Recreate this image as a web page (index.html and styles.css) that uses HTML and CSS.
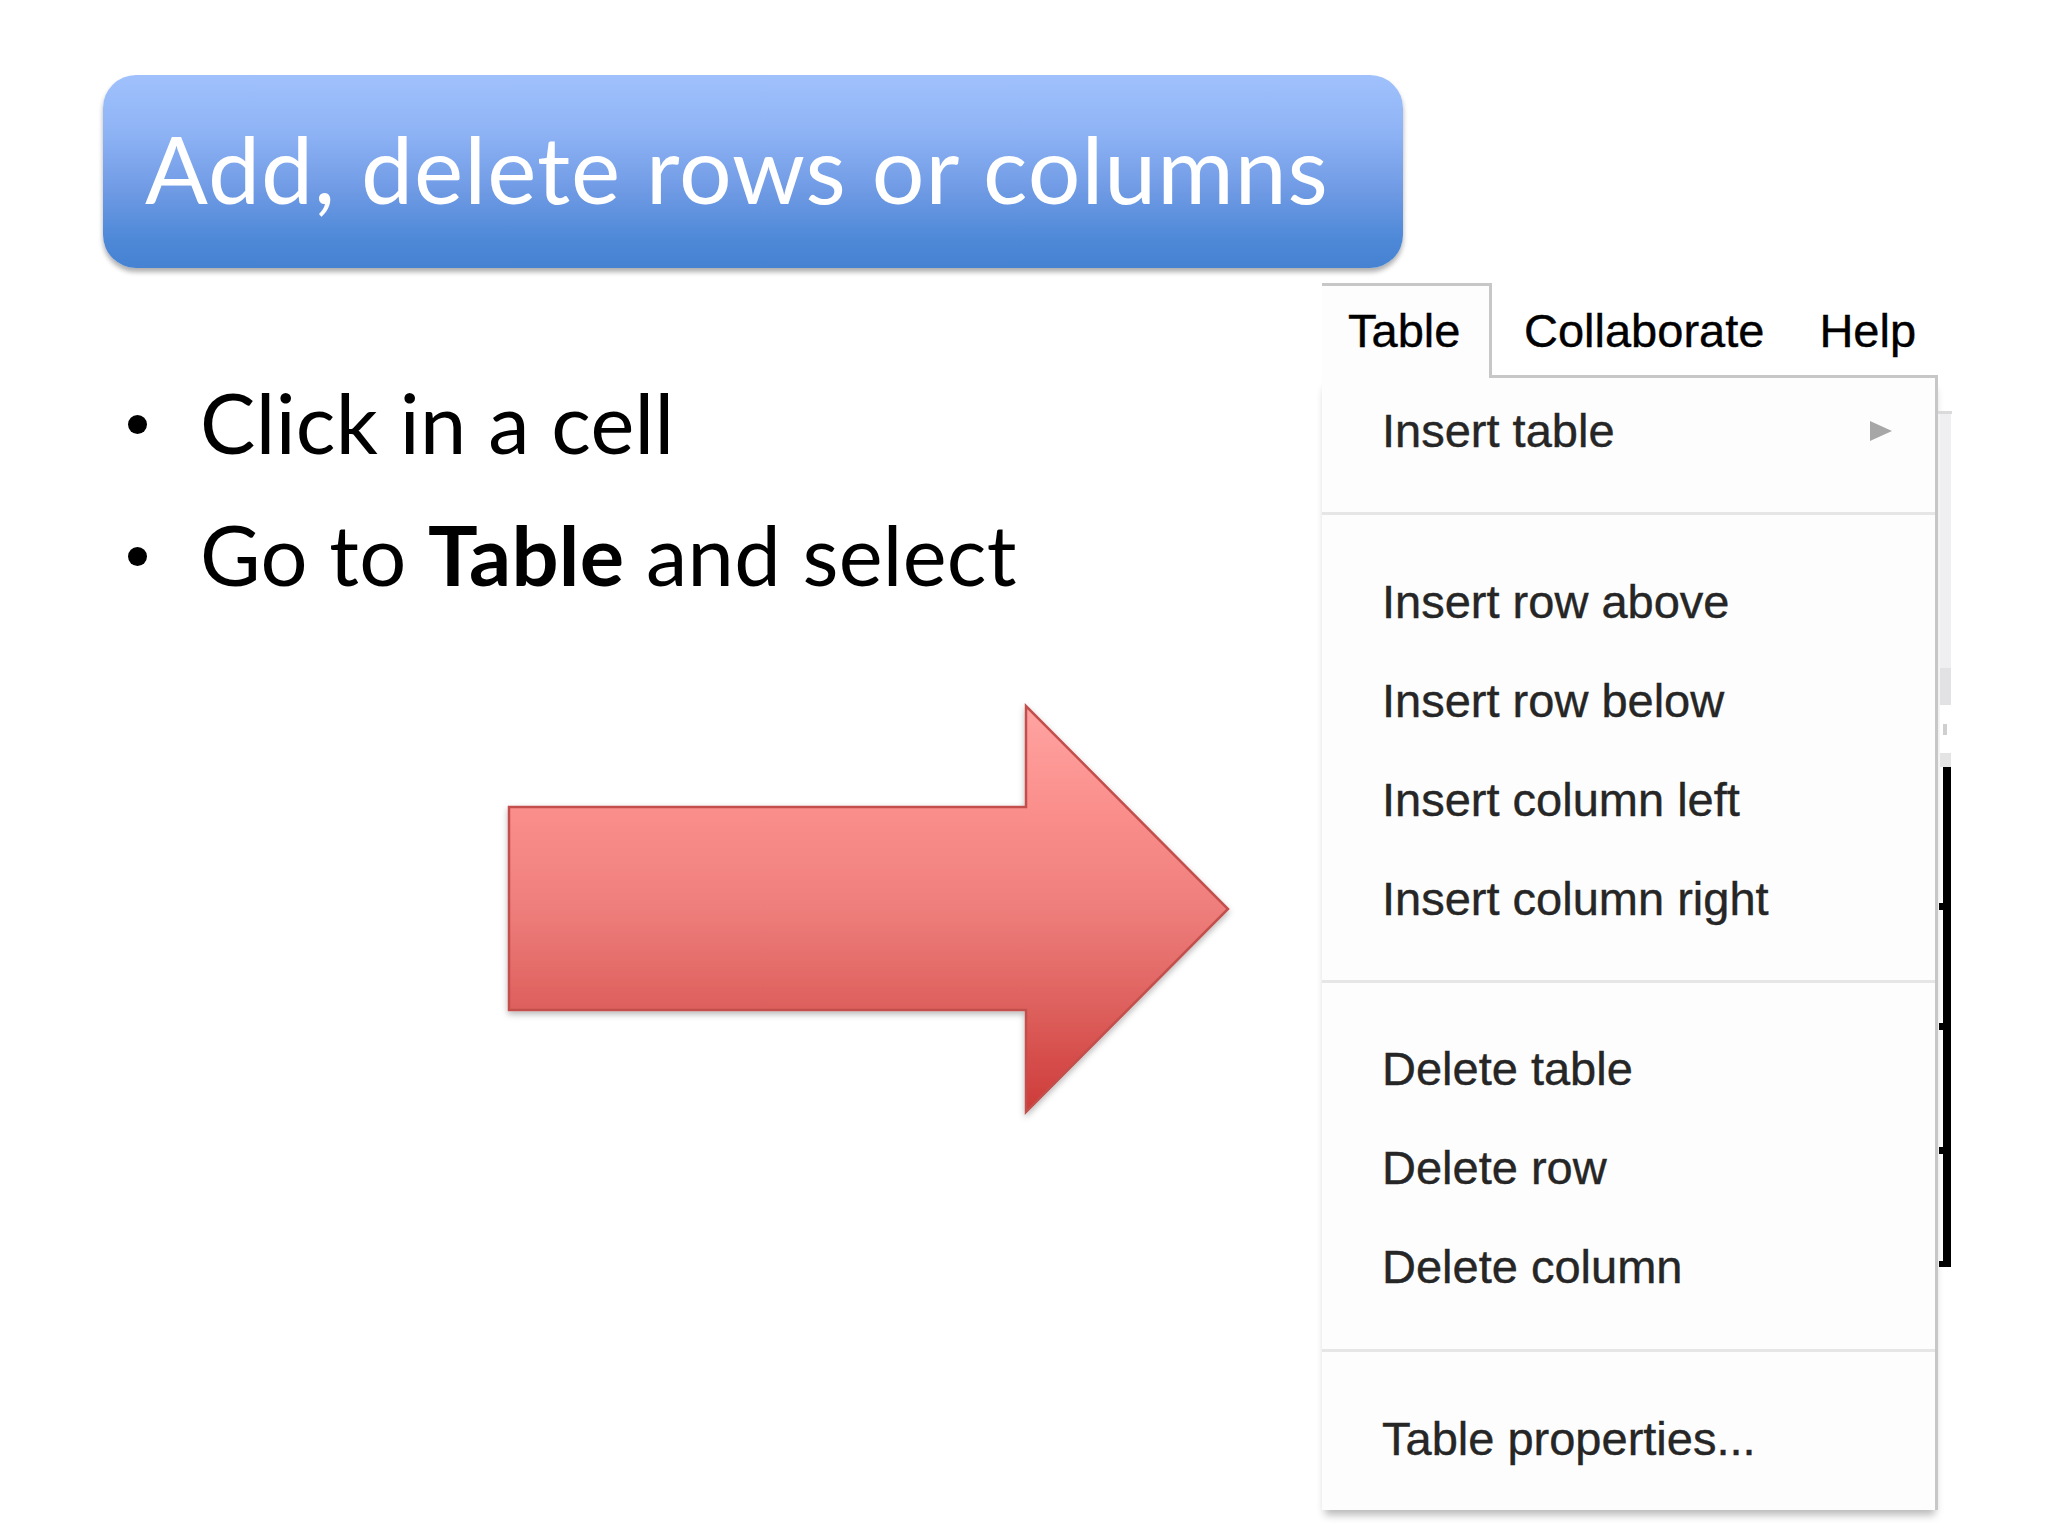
FILE: index.html
```html
<!DOCTYPE html>
<html lang="en">
<head>
<meta charset="utf-8">
<title>Add, delete rows or columns</title>
<link rel="stylesheet" href="styles.css">
</head>
<body>
<div class="slide">
  <header class="title-bar"><h1 class="title">Add, delete rows or columns</h1></header>
  <div class="content">
    <div class="left">
      <ul class="bullets">
        <li><span class="dot"></span><span>Click in a cell</span></li>
        <li><span class="dot"></span><span>Go to <b>Table</b> and select</span></li>
      </ul>
      <svg class="arrow" width="740" height="425" viewBox="0 0 740 425" aria-hidden="true">
        <defs>
          <linearGradient id="ag" x1="0" y1="0" x2="0" y2="1">
            <stop offset="0" stop-color="#ffa4a2"/>
            <stop offset="0.26" stop-color="#fa8e8b"/>
            <stop offset="0.5" stop-color="#ee7e7b"/>
            <stop offset="0.75" stop-color="#dd5f5c"/>
            <stop offset="1" stop-color="#cd3b39"/>
          </linearGradient>
          <filter id="sh" x="-5%" y="-5%" width="110%" height="115%">
            <feDropShadow dx="0" dy="3" stdDeviation="3" flood-color="#000" flood-opacity="0.28"/>
          </filter>
        </defs>
        <polygon points="9,108 526,108 526,7 728,210 526,413 526,311 9,311" fill="url(#ag)" stroke="#c24f4c" stroke-width="2.5" stroke-linejoin="miter" filter="url(#sh)"/>
      </svg>
    </div>
    <div class="menu-shot">
      <div class="menu-col">
        <div class="menubar">
          <div class="tab">Table</div>
          <div class="bar-rest">
            <span class="bar-item collab">Collaborate</span>
            <span class="bar-item help">Help</span>
          </div>
        </div>
        <div class="panel">
          <div class="group g1">
            <div class="item has-sub"><span>Insert table</span><svg class="sub" width="22" height="22" viewBox="0 0 22 22"><polygon points="0,1 22,11 0,21" fill="#a7a7a7"/></svg></div>
          </div>
          <div class="sep"></div>
          <div class="group g2">
            <div class="item">Insert row above</div>
            <div class="item">Insert row below</div>
            <div class="item">Insert column left</div>
            <div class="item">Insert column right</div>
          </div>
          <div class="sep"></div>
          <div class="group g3">
            <div class="item">Delete table</div>
            <div class="item">Delete row</div>
            <div class="item">Delete column</div>
          </div>
          <div class="sep"></div>
          <div class="group g4">
            <div class="item">Table properties...</div>
          </div>
        </div>
      </div>
      <div class="doc-edge">
        <div class="edge-line"></div>
        <div class="edge-light"></div>
        <div class="edge-mid"></div>
        <div class="edge-white"><span class="edge-mark"></span></div>
        <div class="edge-gray"></div>
        <div class="edge-black"></div>
      </div>
    </div>
  </div>
</div>
</body>
</html>
```
FILE: styles.css
```css
html, body {
  margin: 0;
  padding: 0;
  background: #ffffff;
}

.slide {
  width: 2048px;
  height: 1536px;
  overflow: hidden;
  background: #ffffff;
  font-family: Lato, "Open Sans", sans-serif;
}

/* ---------- title ---------- */
.title-bar {
  box-sizing: border-box;
  width: 1300px;
  height: 193px;
  margin: 75px 0 0 103px;
  padding: 0 0 6px 42px;
  border-radius: 33px;
  display: flex;
  align-items: center;
  background: linear-gradient(to bottom, #a0c1fc 0%, #8eb3f5 30%, #6f9ae4 60%, #4e89d8 85%, #4682d2 100%);
  box-shadow: 0 4px 5px rgba(0, 0, 0, 0.32);
}

.title {
  margin: 0;
  font-family: Lato, "Open Sans", sans-serif;
  font-weight: 400;
  font-size: 93px;
  letter-spacing: 1px;
  line-height: 1;
  color: #ffffff;
  white-space: nowrap;
}

/* ---------- content row ---------- */
.content {
  display: flex;
  margin-top: 15px;
}

.left {
  width: 1322px;
  flex: none;
}

.bullets {
  list-style: none;
  margin: 0;
  padding: 73px 0 0 0;
}

.bullets li {
  display: flex;
  align-items: flex-start;
  height: 132px;
  font-size: 83px;
  letter-spacing: 0.3px;
  line-height: 132px;
  color: #000000;
  white-space: nowrap;
}

.bullets b {
  font-weight: 700;
}

.dot {
  flex: none;
  width: 19px;
  height: 19px;
  border-radius: 50%;
  background: #000000;
  margin: 59px 53px 0 128px;
}

.arrow {
  display: block;
  margin: 79px 0 0 500px;
}

/* ---------- menu screenshot ---------- */
.menu-shot {
  display: flex;
  align-items: flex-start;
  font-family: "Liberation Sans", Arial, sans-serif;
  font-size: 47px;
  line-height: 47px;
}

.menu-col {
  width: 616px;
  flex: none;
}

.menubar {
  display: flex;
  height: 95px;
}

.tab {
  box-sizing: border-box;
  width: 170px;
  height: 95px;
  padding: 21px 0 0 26px;
  border-top: 3px solid #c7c7c7;
  border-right: 3px solid #c7c7c7;
  background: #fdfdfd;
  color: #000000;
  -webkit-text-stroke: 0.4px #000000;
}

.bar-rest {
  flex: 1;
  display: flex;
  box-sizing: border-box;
  height: 95px;
  padding-top: 24px;
  border-bottom: 3px solid #c7c7c7;
  color: #000000;
  -webkit-text-stroke: 0.4px #000000;
}

.collab {
  margin-left: 32px;
}

.help {
  margin-left: 55px;
}

.panel {
  box-sizing: border-box;
  height: 1132px;
  border-right: 3px solid #c7c7c7;
  background: #fdfdfd;
  box-shadow: 0 8px 8px -3px rgba(0, 0, 0, 0.28);
  color: #262626;
  -webkit-text-stroke: 0.4px #262626;
}

.group {
  display: flex;
  flex-direction: column;
}

.g1 { padding: 3px 0 32px; }
.g2 { padding: 37px 0 32px; }
.g3 { padding: 36px 0 33px; }
.g4 { padding: 37px 0 22px; }

.item {
  height: 99px;
  line-height: 99px;
  padding-left: 60px;
  white-space: nowrap;
}

.has-sub {
  display: flex;
  align-items: center;
  justify-content: space-between;
  padding-right: 43px;
}

.sub {
  display: block;
  flex: none;
}

.sep {
  height: 3px;
  background: #e6e6e6;
}

/* strip of the document visible beside the menu */
.doc-edge {
  width: 14px;
  flex: none;
  margin-top: 128px;
}

.edge-line {
  height: 3px;
  background: #dadada;
}

.edge-light {
  height: 254px;
  width: 11px;
  margin-left: 2px;
  background: #efeff2;
}

.edge-mid {
  height: 37px;
  width: 11px;
  margin-left: 2px;
  background: #e2e2e5;
}

.edge-white {
  height: 48px;
  width: 11px;
  margin-left: 2px;
  background: #ffffff;
  display: flex;
}

.edge-mark {
  width: 4px;
  height: 11px;
  margin: 19px 0 0 3px;
  background: #cfcfcf;
}

.edge-gray {
  height: 14px;
  width: 11px;
  margin-left: 2px;
  background: #e4e4e4;
}

.edge-black {
  height: 500px;
  width: 12px;
  margin-left: 1px;
  background:
    linear-gradient(#000, #000) 0 136px / 4px 7px no-repeat,
    linear-gradient(#000, #000) 0 256px / 4px 7px no-repeat,
    linear-gradient(#000, #000) 0 380px / 4px 7px no-repeat,
    linear-gradient(#000, #000) 0 494px / 4px 6px no-repeat,
    linear-gradient(to right, transparent 4px, #000 4px);
}
```
